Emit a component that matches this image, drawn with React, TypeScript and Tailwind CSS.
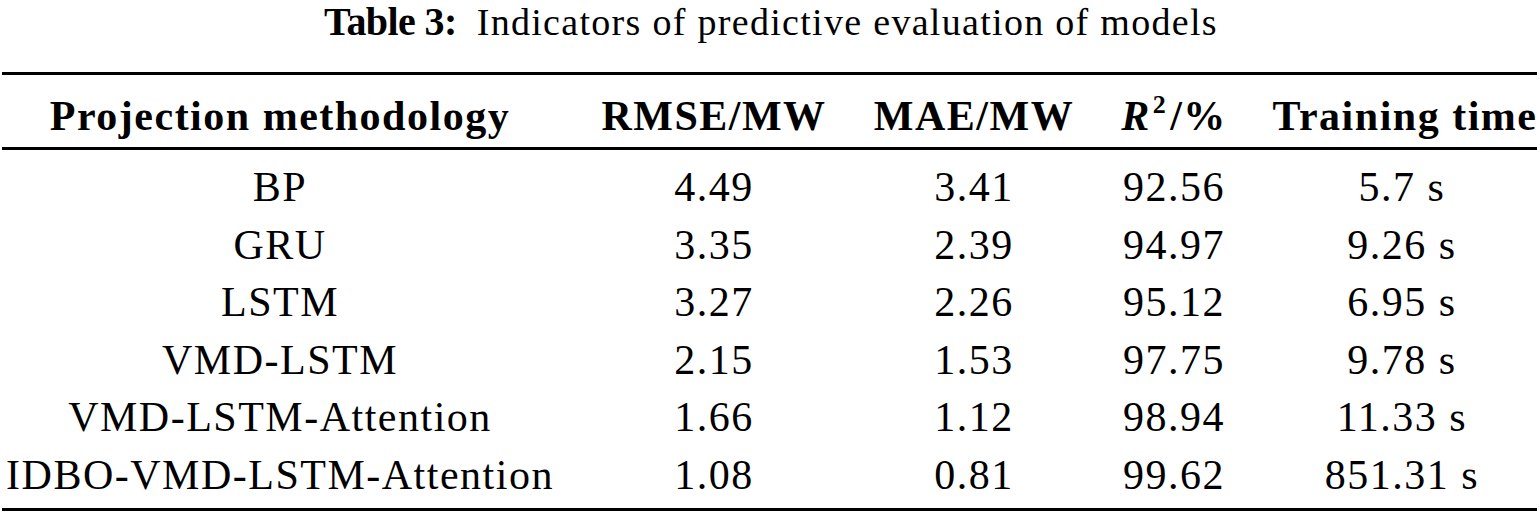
import React from "react";

interface Row {
  method: string;
  rmse: string;
  mae: string;
  r2: string;
  time: string;
}

const rows: Row[] = [
  { method: "BP", rmse: "4.49", mae: "3.41", r2: "92.56", time: "5.7 s" },
  { method: "GRU", rmse: "3.35", mae: "2.39", r2: "94.97", time: "9.26 s" },
  { method: "LSTM", rmse: "3.27", mae: "2.26", r2: "95.12", time: "6.95 s" },
  { method: "VMD-LSTM", rmse: "2.15", mae: "1.53", r2: "97.75", time: "9.78 s" },
  { method: "VMD-LSTM-Attention", rmse: "1.66", mae: "1.12", r2: "98.94", time: "11.33 s" },
  { method: "IDBO-VMD-LSTM-Attention", rmse: "1.08", mae: "0.81", r2: "99.62", time: "851.31 s" },
];

const cols = "grid grid-cols-[556px_312px_208px_192px_264px]";

const Cell: React.FC<{ children: React.ReactNode }> = ({ children }) => (
  <div className="flex justify-center whitespace-nowrap">{children}</div>
);

const App: React.FC = () => {
  return (
    <div className="w-[1539px] h-[515px] bg-white text-black text-[42px] font-['Liberation_Serif',serif] overflow-hidden">
      {/* caption */}
      <div className="h-[40px] leading-[40px] pt-[1px] text-center whitespace-nowrap mb-[32px] pl-[3px]">
        <span className="font-bold text-[40px] tracking-[-0.6px]">Table 3:</span>
        <span className="ml-[20px] text-[38px] tracking-[1.3px]">
          Indicators of predictive evaluation of models
        </span>
      </div>

      <div className="mx-[2px] border-t-[3px] border-b-[3px] border-black tracking-[1.5px]">
        <div className={`${cols} font-bold leading-[62px] pt-[10px]`}>
          <Cell>Projection methodology</Cell>
          <Cell>RMSE/MW</Cell>
          <Cell>MAE/MW</Cell>
          <Cell>
            <span>
              <i>R</i>
              <sup className="text-[26px] -top-[17px] ml-[2px] mr-[3px]">2</sup>/%
            </span>
          </Cell>
          <Cell>
            <span className="pl-[6px]">Training time</span>
          </Cell>
        </div>
      </div>

      <div className="mx-[2px] border-b-[3px] border-black pt-[9px] pb-[3px] tracking-[1.5px]">
        {rows.map((r) => (
          <div key={r.method} className={`${cols} leading-[57.6px]`}>
            <Cell>{r.method}</Cell>
            <Cell>{r.rmse}</Cell>
            <Cell>{r.mae}</Cell>
            <Cell>{r.r2}</Cell>
            <Cell>{r.time}</Cell>
          </div>
        ))}
      </div>
    </div>
  );
};

export default App;
